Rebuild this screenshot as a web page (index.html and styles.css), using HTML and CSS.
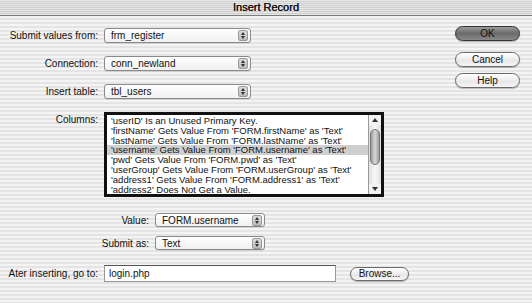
FILE: index.html
```html
<!DOCTYPE html>
<html lang="en">
<head>
    <meta charset="UTF-8">
    <title>Insert Record</title>
    <link rel="stylesheet" href="styles.css">
</head>
<body>
    <div class="titlebar">Insert Record</div>

    <div class="dialog">
        <div class="form">
            <div class="row row-first">
                <label>Submit values from:</label>
                <div class="popup wide"><span>frm_register</span><i class="stepper"></i></div>
            </div>
            <div class="row">
                <label>Connection:</label>
                <div class="popup wide"><span>conn_newland</span><i class="stepper"></i></div>
            </div>
            <div class="row">
                <label>Insert table:</label>
                <div class="popup wide"><span>tbl_users</span><i class="stepper"></i></div>
            </div>

            <div class="row row-top row-columns">
                <label>Columns:</label>
                <div class="listbox">
                    <ul class="items">
                        <li>'userID' Is an Unused Primary Key.</li>
                        <li>'firstName' Gets Value From 'FORM.firstName' as 'Text'</li>
                        <li>'lastName' Gets Value From 'FORM.lastName' as 'Text'</li>
                        <li class="selected">'username' Gets Value From 'FORM.username' as 'Text'</li>
                        <li>'pwd' Gets Value From 'FORM.pwd' as 'Text'</li>
                        <li>'userGroup' Gets Value From 'FORM.userGroup' as 'Text'</li>
                        <li>'address1' Gets Value From 'FORM.address1' as 'Text'</li>
                        <li>'address2' Does Not Get a Value.</li>
                    </ul>
                    <div class="scrollbar">
                        <span class="arrow up"></span>
                        <div class="track"><div class="thumb"></div></div>
                        <span class="arrow down"></span>
                    </div>
                </div>
            </div>

            <div class="row sub row-value">
                <label>Value:</label>
                <div class="popup narrow"><span>FORM.username</span><i class="stepper"></i></div>
            </div>
            <div class="row sub">
                <label>Submit as:</label>
                <div class="popup narrow"><span>Text</span><i class="stepper"></i></div>
            </div>

            <div class="row row-after">
                <label>Ater inserting, go to:</label>
                <div class="textfield">login.php</div>
                <button class="btn browse">Browse...</button>
            </div>
        </div>

        <div class="buttons">
            <button class="btn default">OK</button>
            <button class="btn">Cancel</button>
            <button class="btn">Help</button>
        </div>
    </div>
</body>
</html>
```

FILE: styles.css
```css
* {
    margin: 0;
    padding: 0;
    box-sizing: border-box;
}

body {
    width: 532px;
    height: 303px;
    overflow: hidden;
    font-family: 'Liberation Sans', Arial, sans-serif;
    font-size: 10px;
    color: #111;
    background: repeating-linear-gradient(#f4f4f4 0, #f4f4f4 2px, #e4e4e4 2px, #e4e4e4 4px);
}

.titlebar {
    height: 16px;
    line-height: 15px;
    text-align: center;
    font-size: 11px;
    color: #111;
    text-shadow: 0 0 0.4px #111;
    background: repeating-linear-gradient(#e6e6e6 0, #e6e6e6 1px, #cfcfcf 1px, #cfcfcf 2px);
    border-bottom: 1px solid #7a7a7a;
}

.dialog {
    display: flex;
}

.form {
    width: 440px;
}

.row {
    display: flex;
    align-items: center;
    margin-top: 13px;
}

.row label {
    width: 104px;
    padding-right: 6px;
    text-align: right;
    flex-shrink: 0;
    white-space: nowrap;
}

.row-first {
    margin-top: 12px;
}

.row-top {
    align-items: flex-start;
}

.row-top label {
    padding-top: 2px;
}

.row-columns {
    margin-top: 13px;
}

.sub label {
    width: 155px;
}

.sub {
    margin-top: 9px;
}

.row-value {
    margin-top: 16px;
}

.row-after {
    margin-top: 15px;
}

/* popup menus */
.popup {
    display: flex;
    align-items: center;
    height: 15px;
    padding-left: 6px;
    border: 1px solid #8a8a8a;
    border-radius: 3px;
    background: linear-gradient(#ffffff, #f0f0f0);
    box-shadow: 0 1px 0 #d0d0d0;
}

.popup span {
    flex: 1;
}

.popup.wide {
    width: 147px;
}

.popup.narrow {
    width: 110px;
    height: 14px;
}

.stepper {
    width: 10px;
    height: 11px;
    margin-right: 2px;
    border: 1px solid #9a9a9a;
    border-radius: 2px;
    background: linear-gradient(#dcdcdc, #bcbcbc);
    position: relative;
}

.stepper::before,
.stepper::after {
    content: '';
    position: absolute;
    left: 2px;
    border-left: 2px solid transparent;
    border-right: 2px solid transparent;
}

.stepper::before {
    top: 1px;
    border-bottom: 3px solid #333;
}

.stepper::after {
    bottom: 1px;
    border-top: 3px solid #333;
}

/* columns list */
.listbox {
    display: flex;
    width: 280px;
    height: 85px;
    border: 3px solid #111;
    background: #fff;
}

.items {
    flex: 1;
    list-style: none;
    font-size: 9.5px;
    padding-top: 1px;
    overflow: hidden;
}

.items li {
    height: 9.8px;
    line-height: 9.8px;
    padding-left: 4px;
    white-space: nowrap;
}

.items li.selected {
    background: #cfcfcf;
}

.scrollbar {
    width: 13px;
    display: flex;
    flex-direction: column;
    border-left: 1px solid #9a9a9a;
    background: #f2f2f2;
}

.arrow {
    height: 10px;
    position: relative;
}

.arrow::after {
    content: '';
    position: absolute;
    left: 3px;
    border-left: 3px solid transparent;
    border-right: 3px solid transparent;
}

.arrow.up::after {
    top: 3px;
    border-bottom: 4px solid #333;
}

.arrow.down::after {
    bottom: 3px;
    border-top: 4px solid #333;
}

.track {
    flex: 1;
    padding: 4px 1px;
    background: linear-gradient(to right, #e0e0e0, #f8f8f8, #e0e0e0);
}

.thumb {
    height: 36px;
    border: 1px solid #777;
    border-radius: 5px;
    background: linear-gradient(to right, #9c9c9c, #d8d8d8, #9c9c9c);
}

/* text field */
.textfield {
    width: 232px;
    height: 17px;
    line-height: 15px;
    padding-left: 4px;
    background: #fff;
    border: 1px solid #999;
    border-top-color: #555;
}

/* push buttons */
.btn {
    font-family: inherit;
    font-size: 10px;
    color: #111;
    height: 15px;
    border: 1px solid #6a6a6a;
    border-radius: 8px;
    background: linear-gradient(#ffffff, #e8e8e8 60%, #f6f6f6);
    box-shadow: 0 1px 1px rgba(0, 0, 0, 0.25);
}

.browse {
    width: 59px;
    margin-left: 14px;
    height: 14px;
    line-height: 12px;
}

.buttons {
    display: flex;
    flex-direction: column;
    gap: 6px;
    padding-top: 10px;
    margin-left: 15px;
}

.buttons .btn {
    width: 65px;
    height: 15px;
}

.buttons .default {
    border-color: #333;
    background: linear-gradient(#9a9a9a, #6a6a6a 50%, #8a8a8a);
    margin-bottom: 5px;
}
```
